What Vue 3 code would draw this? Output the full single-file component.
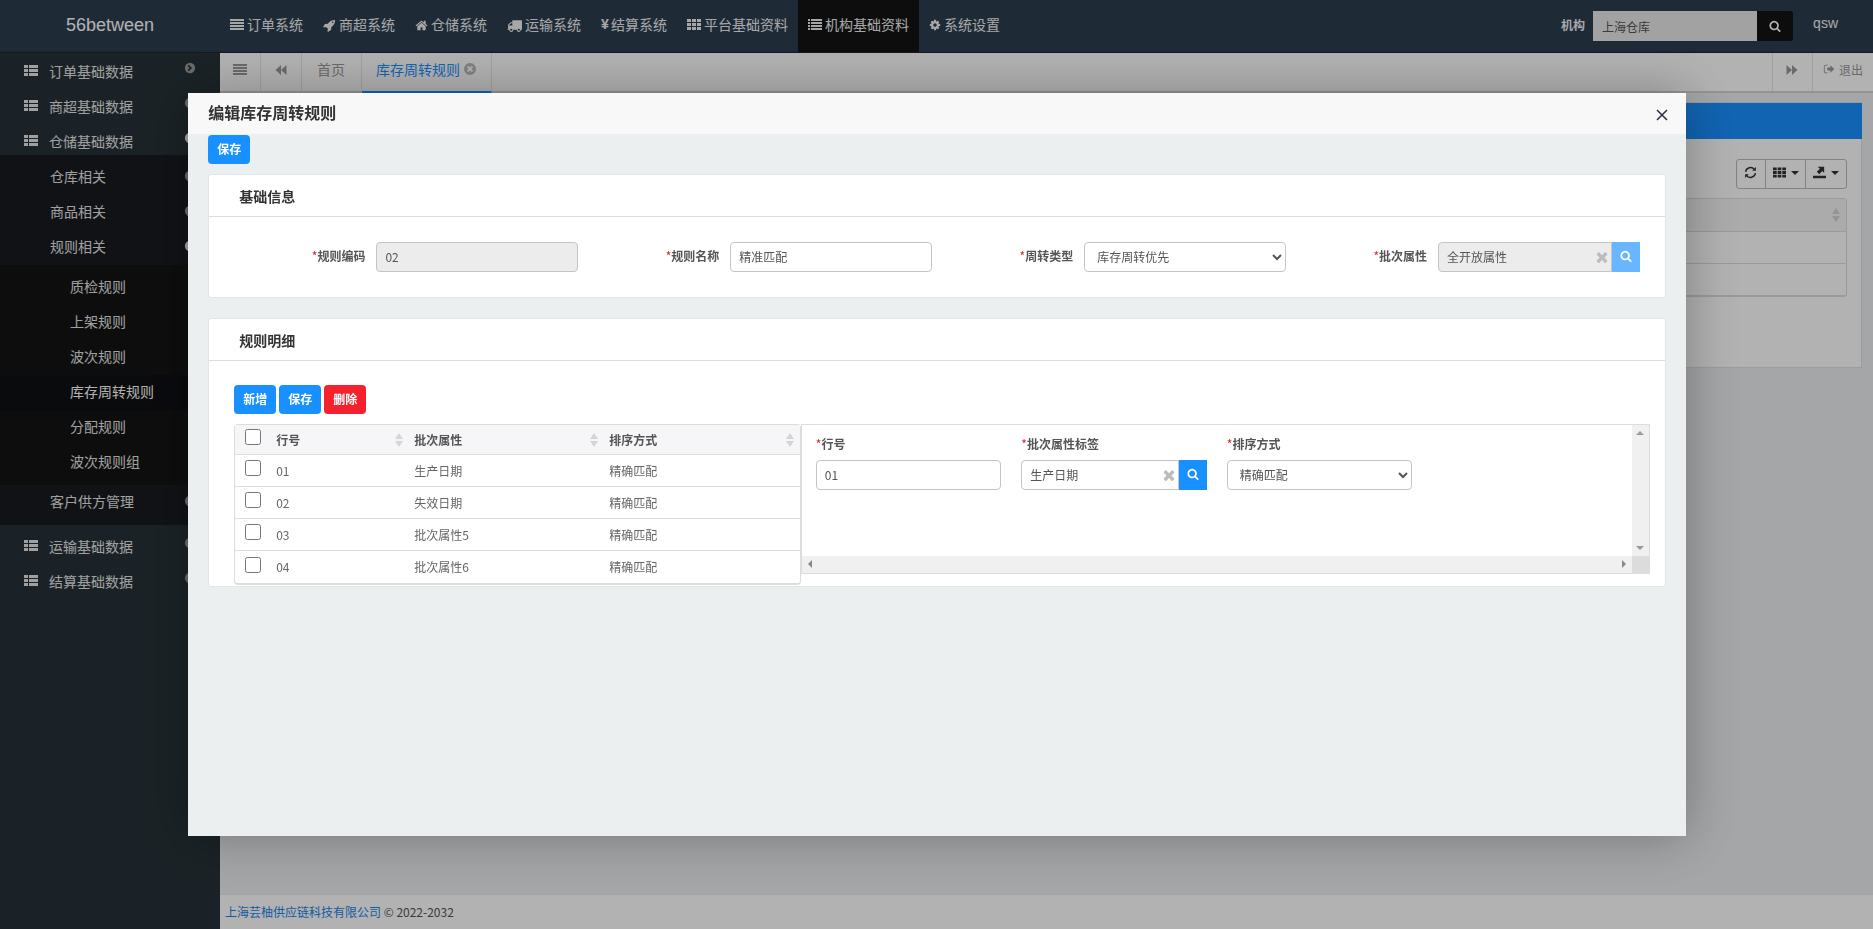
<script setup>
import { ref } from 'vue'

const paths = {
  search: 'M1216 832q0-185-131.5-316.5t-316.5-131.5-316.5 131.5-131.5 316.5 131.5 316.5 316.5 131.5 316.5-131.5 131.5-316.5zm512 832q0 52-38 90t-90 38q-54 0-90-38l-343-342q-179 124-399 124-143 0-273.5-55.5t-225-150-150-225-55.5-273.5 55.5-273.5 150-225 225-150 273.5-55.5 273.5 55.5 225 150 150 225 55.5 273.5q0 220-124 399l343 343q37 37 37 90z',
  home: 'M1472 992v480q0 26-19 45t-45 19h-384v-384h-256v384h-384q-26 0-45-19t-19-45v-480q0-1 .5-3t.5-3l575-474 575 474q1 2 1 6zm223-69l-62 74q-8 9-21 11h-3q-13 0-21-7l-692-577-692 577q-12 8-24 7-13-2-21-11l-62-74q-8-10-7-23.5t11-21.5l719-599q32-26 76-26t76 26l244 204v-195q0-14 9-23t23-9h192q14 0 23 9t9 23v408l219 182q10 8 11 21.5t-7 23.5z',
  rocket: 'M1440 448q0-40-28-68t-68-28-68 28-28 68 28 68 68 28 68-28 28-68zm224-288q0 249-75.5 430.5t-253.5 360.5q-81 80-195 176l-20 379q-2 16-16 26l-384 224q-7 4-16 4-12 0-23-9l-64-64q-13-14-8-32l85-276-281-281-276 85q-3 1-9 1-14 0-23-9l-64-64q-17-19-5-39l224-384q10-14 26-16l379-20q96-114 176-195 188-187 358-258t431-71q14 0 24 9.5t10 22.5z',
  truck: 'M640 1408q0-52-38-90t-90-38-90 38-38 90 38 90 90 38 90-38 38-90zm-384-512h384v-256h-158q-13 0-22 9l-195 195q-9 9-9 22v30zm1280 512q0-52-38-90t-90-38-90 38-38 90 38 90 90 38 90-38 38-90zm256-1088v1024q0 15-4 26.5t-13.5 18.5-16.5 11.5-23.5 6-22.5 2-25.5 0-22.5-.5q0 106-75 181t-181 75-181-75-75-181h-384q0 106-75 181t-181 75-181-75-75-181h-64q-3 0-22.5.5t-25.5 0-22.5-2-23.5-6-16.5-11.5-13.5-18.5-4-26.5q0-26 19-45t45-19v-320q0-8-.5-35t0-38 2.5-34.5 6.5-37 14-30.5 22.5-30l198-198q19-19 50.5-32t58.5-13h160v-192q0-26 19-45t45-19h1024q26 0 45 19t19 45z',
  cog: 'M1152 896q0-106-75-181t-181-75-181 75-75 181 75 181 181 75 181-75 75-181zm512-109v222q0 12-8 23t-20 13l-185 28q-19 54-39 91 35 50 107 138 10 12 10 25t-9 23q-27 37-99 108t-94 71q-12 0-26-9l-138-108q-44 23-91 38-16 136-29 186-7 28-36 28h-222q-14 0-24.5-8.5t-11.5-21.5l-28-184q-49-16-90-37l-141 107q-10 9-25 9-14 0-25-11-126-114-165-168-7-10-7-23 0-12 8-23 15-21 51-66.5t54-70.5q-27-50-41-99l-183-27q-13-2-21-12.5t-8-23.5v-222q0-12 8-23t19-13l186-28q14-46 39-92-40-57-107-138-10-12-10-24 0-10 9-23 26-36 98.5-107.5t94.5-71.5q13 0 26 10l138 107q44-23 91-38 16-136 29-186 7-28 36-28h222q14 0 24.5 8.5t11.5 21.5l28 184q49 16 90 37l142-107q9-9 24-9 13 0 25 10 129 119 165 170 7 8 7 22 0 12-8 23-15 21-51 66.5t-54 70.5q26 50 41 98l183 28q13 2 21 12.5t8 23.5z',
  times: 'M1490 1322q0 40-28 68l-136 136q-28 28-68 28t-68-28l-294-294-294 294q-28 28-68 28t-68-28l-136-136q-28-28-28-68t28-68l294-294-294-294q-28-28-28-68t28-68l136-136q28-28 68-28t68 28l294 294 294-294q28-28 68-28t68 28l136 136q28 28 28 68t-28 68l-294 294 294 294q28 28 28 68z',
  timesCircle: 'M1277 1122q0-26-19-45l-181-181 181-181q19-19 19-45 0-27-19-46l-90-90q-19-18-46-18-26 0-45 18l-181 181-181-181q-19-18-45-18-27 0-46 18l-90 90q-19 19-19 46 0 26 19 45l181 181-181 181q-19 19-19 45 0 27 19 46l90 90q19 18 46 18 26 0 45-18l181-181 181 181q19 18 45 18 27 0 46-18l90-90q19-19 19-46zm387-226q0 209-103 385.5t-279.5 279.5-385.5 103-385.5-103-279.5-279.5-103-385.5 103-385.5 279.5-279.5 385.5-103 385.5 103 279.5 279.5 103 385.5z',
  bars: 'M0 128h1792v256H0zM0 512h1792v256H0zM0 896h1792v256H0zM0 1280h1792v256H0z',
  th: 'M0 128h512v384H0zM640 128h512v384H640zM1280 128h512v384h-512zM0 640h512v384H0zM640 640h512v384H640zM1280 640h512v384h-512zM0 1152h512v384H0zM640 1152h512v384H640zM1280 1152h512v384h-512z',
  list: 'M0 128h256v256H0zM384 128h1408v256H384zM0 512h256v256H0zM384 512h1408v256H384zM0 896h256v256H0zM384 896h1408v256H384zM0 1280h256v256H0zM384 1280h1408v256H384z',
  thList: 'M0 128h512v384H0zM640 128h1152v384H640zM0 640h512v384H0zM640 640h1152v384H640zM0 1152h512v384H0zM640 1152h1152v384H640z',
  backward: 'M896 256v1280L192 896zM1600 256v1280L896 896z',
  forward: 'M192 256v1280l704-640zM896 256v1280l704-640z',
  circleRight: 'M896 128a768 768 0 1 0 0 1536a768 768 0 1 0 0-1536zM720 420l480 476-480 476-180-180 300-296-300-296z',
  signOut: 'M704 1536H416q-120 0-204-84t-84-204V544q0-120 84-204t204-84h288v128H416q-66 0-113 47t-47 113v704q0 66 47 113t113 47h288zM1696 896l-600 560v-330H640V666h456V336z',
  exporter: 'M0 1330h1792v360H0zM640 100h900v850l-260-250-420 430-340-330 430-420z',
}

const navItems = [
  { text: '订单系统', icon: 'bars', size: 14 },
  { text: '商超系统', icon: 'rocket', size: 13 },
  { text: '仓储系统', icon: 'home', size: 13 },
  { text: '运输系统', icon: 'truck', size: 15 },
  { text: '结算系统', yen: true },
  { text: '平台基础资料', icon: 'th', size: 14 },
  { text: '机构基础资料', icon: 'list', size: 14, active: true },
  { text: '系统设置', icon: 'cog', size: 12 },
]

const menu = [
  { text: '订单基础数据' },
  { text: '商超基础数据' },
  {
    text: '仓储基础数据',
    open: true,
    children: [
      { text: '仓库相关' },
      { text: '商品相关' },
      { text: '规则相关', open: true, children: ['质检规则', '上架规则', '波次规则', '库存周转规则', '分配规则', '波次规则组'] },
      { text: '客户供方管理' },
    ],
  },
  { text: '运输基础数据' },
  { text: '结算基础数据' },
]

const rows = ref([
  { no: '01', attr: '生产日期', sort: '精确匹配', checked: false },
  { no: '02', attr: '失效日期', sort: '精确匹配', checked: false },
  { no: '03', attr: '批次属性5', sort: '精确匹配', checked: false },
  { no: '04', attr: '批次属性6', sort: '精确匹配', checked: false },
])

const org = ref('上海仓库')
const form = ref({ code: '02', name: '精准匹配', type: '库存周转优先', attr: '全开放属性' })
const detail = ref({ no: '01', attr: '生产日期', sort: '精确匹配' })
</script>

<template>
  <div class="page">
    <header class="topbar">
      <a class="brand" href="#">56between</a>
      <nav class="nav">
        <a v-for="n in navItems" :key="n.text" href="#" class="nav-item" :class="{ active: n.active }">
          <span v-if="n.yen" class="yen">¥</span>
          <svg v-else class="ico" :width="n.size" :height="n.size" viewBox="0 0 1792 1792"><path :d="paths[n.icon]" /></svg>
          <span>{{ n.text }}</span>
        </a>
      </nav>
      <div class="org">
        <label for="org">机构</label>
        <input id="org" v-model="org" type="text" />
        <button type="button" class="org-btn" aria-label="搜索">
          <svg width="12" height="12" viewBox="0 0 1792 1792"><path :d="paths.search" /></svg>
        </button>
      </div>
      <a class="user" href="#">qsw</a>
    </header>

    <div class="shell">
      <aside class="sidebar">
        <ul class="menu">
          <li v-for="m in menu" :key="m.text">
            <a href="#" class="m1" :class="{ opened: m.open }">
              <svg class="m-ico" width="14" height="14" viewBox="0 0 1792 1792"><path :d="paths.thList" /></svg>
              <span>{{ m.text }}</span>
              <svg class="m-arrow" width="12" height="12" viewBox="0 0 1792 1792"><path :d="paths.circleRight" fill-rule="evenodd" /></svg>
            </a>
            <ul v-if="m.children" class="sub">
              <li v-for="s in m.children" :key="s.text">
                <a href="#" class="m2" :class="{ opened: s.open }">
                  <span>{{ s.text }}</span>
                  <svg class="m-arrow" width="12" height="12" viewBox="0 0 1792 1792"><path :d="paths.circleRight" fill-rule="evenodd" /></svg>
                </a>
                <ul v-if="s.children" class="leaf">
                  <li v-for="t in s.children" :key="t">
                    <a href="#" class="m3" :class="{ active: t === '库存周转规则' }">{{ t }}</a>
                  </li>
                </ul>
              </li>
            </ul>
          </li>
        </ul>
      </aside>

      <main class="main">
        <div class="tabs">
          <button type="button" class="tab tool" aria-label="菜单">
            <svg width="14" height="14" viewBox="0 0 1792 1792"><path :d="paths.bars" /></svg>
          </button>
          <button type="button" class="tab tool" aria-label="向左">
            <svg width="14" height="14" viewBox="0 0 1792 1792"><path :d="paths.backward" /></svg>
          </button>
          <a href="#" class="tab">首页</a>
          <a href="#" class="tab current">库存周转规则
            <svg width="14" height="14" viewBox="0 0 1792 1792"><path :d="paths.timesCircle" /></svg>
          </a>
          <span class="spacer"></span>
          <button type="button" class="tab tool right" aria-label="向右">
            <svg width="14" height="14" viewBox="0 0 1792 1792"><path :d="paths.forward" /></svg>
          </button>
          <a href="#" class="tab logout">
            <svg width="12" height="12" viewBox="0 0 1792 1792"><path :d="paths.signOut" /></svg>退出
          </a>
        </div>

        <section class="panel">
          <div class="panel-head"></div>
          <div class="panel-body">
            <div class="btn-group">
              <button type="button" aria-label="刷新">
                <svg width="13" height="13" viewBox="0 0 14 14" stroke="currentColor">
                  <path d="M1.700 6.300A5.300 5.300 0 0 1 11.300 4M12.300 7.700A5.300 5.300 0 0 1 2.700 10" fill="none" stroke-width="1.500" />
                  <path d="M12.800 1.200v4H8.800zM1.200 12.800v-4h4z" stroke="none" />
                </svg>
              </button>
              <button type="button" aria-label="列">
                <svg width="13" height="13" viewBox="0 0 1792 1664"><path :d="paths.th" /></svg><i class="caret"></i>
              </button>
              <button type="button" aria-label="导出">
                <svg width="13" height="13" viewBox="0 0 1792 1792"><path :d="paths.exporter" /></svg><i class="caret"></i>
              </button>
            </div>
            <div class="bg-table">
              <div class="bg-row bg-th"><span class="sort"></span></div>
              <div class="bg-row"></div>
              <div class="bg-row"></div>
            </div>
          </div>
        </section>

        <footer class="footer"><a href="#">上海芸柚供应链科技有限公司</a> © 2022-2032</footer>
      </main>
    </div>

    <div class="shade">
      <div class="dialog" role="dialog" aria-labelledby="dlg-title">
        <div class="dialog-head">
          <h2 id="dlg-title">编辑库存周转规则</h2>
          <button type="button" class="close" aria-label="关闭">
            <svg width="12" height="12" viewBox="0 0 12 12"><path d="M1 1l10 10M11 1L1 11" stroke="#2d2c3b" stroke-width="1.500" /></svg>
          </button>
        </div>
        <div class="dialog-body">
          <button type="button" class="btn">保存</button>

          <section class="card">
            <h3>基础信息</h3>
            <div class="form-row">
              <div class="item">
                <label for="code"><b>*</b>规则编码</label>
                <div class="field"><input id="code" v-model="form.code" type="text" readonly /></div>
              </div>
              <div class="item">
                <label for="name"><b>*</b>规则名称</label>
                <div class="field"><input id="name" v-model="form.name" type="text" /></div>
              </div>
              <div class="item">
                <label for="type"><b>*</b>周转类型</label>
                <div class="field"><select id="type" v-model="form.type"><option>库存周转优先</option></select></div>
              </div>
              <div class="item">
                <label for="attr"><b>*</b>批次属性</label>
                <div class="field pick">
                  <input id="attr" v-model="form.attr" type="text" readonly />
                  <svg class="clear" width="16" height="16" viewBox="0 0 1792 1792"><path :d="paths.times" /></svg>
                  <button type="button" disabled aria-label="选择">
                    <svg width="12" height="12" viewBox="0 0 1792 1792"><path :d="paths.search" /></svg>
                  </button>
                </div>
              </div>
            </div>
          </section>

          <section class="card">
            <h3>规则明细</h3>
            <div class="detail">
              <div class="actions">
                <button type="button" class="btn">新增</button>
                <button type="button" class="btn">保存</button>
                <button type="button" class="btn danger">删除</button>
              </div>
              <div class="split">
                <div class="grid-wrap">
                  <table>
                    <thead>
                      <tr>
                        <th class="c0"><input type="checkbox" aria-label="全选" /></th>
                        <th class="c1"><div>行号<span class="sort"></span></div></th>
                        <th class="c2"><div>批次属性<span class="sort"></span></div></th>
                        <th class="c3"><div>排序方式<span class="sort"></span></div></th>
                      </tr>
                    </thead>
                    <tbody>
                      <tr v-for="r in rows" :key="r.no">
                        <td class="c0"><input v-model="r.checked" type="checkbox" :aria-label="r.no" /></td>
                        <td>{{ r.no }}</td>
                        <td>{{ r.attr }}</td>
                        <td>{{ r.sort }}</td>
                      </tr>
                    </tbody>
                  </table>
                </div>
                <div class="pane">
                  <div class="pane-form">
                    <div>
                      <label for="d-no"><b>*</b>行号</label>
                      <input id="d-no" v-model="detail.no" type="text" />
                    </div>
                    <div>
                      <label for="d-attr"><b>*</b>批次属性标签</label>
                      <div class="pick">
                        <input id="d-attr" v-model="detail.attr" type="text" />
                        <svg class="clear" width="16" height="16" viewBox="0 0 1792 1792"><path :d="paths.times" /></svg>
                        <button type="button" aria-label="选择">
                          <svg width="12" height="12" viewBox="0 0 1792 1792"><path :d="paths.search" /></svg>
                        </button>
                      </div>
                    </div>
                    <div>
                      <label for="d-sort"><b>*</b>排序方式</label>
                      <select id="d-sort" v-model="detail.sort"><option>精确匹配</option></select>
                    </div>
                  </div>
                  <div class="bar vbar"><i class="up"></i><i class="down"></i></div>
                  <div class="bar hbar"><i class="left"></i><i class="rt"></i></div>
                  <div class="corner"></div>
                </div>
              </div>
            </div>
          </section>
        </div>
      </div>
    </div>
  </div>
</template>

<style>
body { margin: 0; }
</style>

<style scoped>
.page {
  display: flex;
  flex-direction: column;
  min-height: 100vh;
  font-family: "Noto Sans CJK SC", sans-serif;
  font-size: 12px;
  color: #555;
}
.page * { box-sizing: border-box; }
a { color: inherit; text-decoration: none; }
ul { list-style: none; margin: 0; padding: 0; }
button, input, select { font: inherit; margin: 0; }
button { border: 0; padding: 0; }
svg { fill: currentColor; flex: none; }

.topbar {
  display: flex;
  align-items: center;
  height: 53px;
  padding-right: 35px;
  background: #2c3e50;
  border-bottom: 1px solid #1b2430;
  color: #f0f0f0;
}
.brand {
  width: 220px;
  padding-left: 66px;
  padding-bottom: 2px;
  font: 18px "Liberation Sans", sans-serif;
  color: #fff;
}
.nav { display: flex; align-self: stretch; flex: 1; font-size: 14px; }
.nav-item {
  display: flex;
  align-items: center;
  gap: 3px;
  padding: 0 10px 4px;
  white-space: nowrap;
}
.nav-item .ico { margin-top: 2px; }
.nav-item.active { background: #141414; }
.yen { width: 7px; font: bold 14px "Liberation Sans", sans-serif; }
.org { display: flex; align-items: center; }
.org label { margin-right: 8px; padding-bottom: 4px; font-weight: bold; }
.org input {
  width: 164px;
  height: 30px;
  padding: 0 9px;
  border: 0;
  border-radius: 0;
  background: #e8e8e8;
  color: #555;
}
.org-btn {
  display: grid;
  place-items: center;
  width: 36px;
  height: 30px;
  border-radius: 0 3px 3px 0;
  background: #141414;
  color: #fff;
}
.user { margin-left: 20px; padding-bottom: 6px; font: 14px "Liberation Sans", sans-serif; }

.shell { display: flex; flex: 1; }
.sidebar { width: 220px; flex: none; background: #263238; color: #e6e6e6; font-size: 14px; }
.m1, .m2, .m3 { display: flex; height: 35px; line-height: 26px; align-items: center; }
.m1 { align-items: flex-end; padding: 0 24px 1px; gap: 11px; }
.m1 .m-ico { margin-bottom: 6px; }
.menu > li:first-child .m1 { height: 32px; }
.m-arrow { margin-left: auto; color: #999; }
.m1 .m-arrow { margin-bottom: 10px; }
.opened .m-arrow { color: #eee; }
.sub { padding: 5px 0; background: #181b20; }
.m2 { padding: 0 24px 4px 50px; }
.leaf { padding: 5px 0; background: #141414; }
.m3 { padding: 0 0 4px 70px; }
.m3.active { background: #0f1014; color: #fff; }

.main { display: flex; flex-direction: column; flex: 1; min-width: 0; background: #eceef0; }
.tabs {
  display: flex;
  height: 40px;
  background: #fff;
  border-bottom: 2px solid #d5d5d5;
  color: #999;
  font-size: 14px;
}
.tab {
  display: flex;
  align-items: center;
  gap: 3px;
  padding: 0 16px 6px 15px;
  border-right: 1px solid #e6e6e6;
  background: none;
  color: inherit;
}
.tab.tool { width: 41px; padding: 0 0 4px; justify-content: center; }
.tab.current { margin-bottom: -2px; padding: 0 14px 6px; border-bottom: 2px solid #1890ff; color: #1890ff; }
.tab.current svg { color: #bbb; }
.spacer { flex: 1; }
.tab.right { border-left: 1px solid #e6e6e6; }
.tab.logout { padding: 0 10px 6px; gap: 4px; font-size: 12px; border-right: 0; }

.panel { margin: 9px 11px 10px 10px; border: 1px solid #e0e0e0; background: #fff; }
.panel-head { height: 36px; background: #1890ff; margin: 0 -1px; }
.panel-body { padding: 20px 14px 70px; }
.btn-group { display: flex; width: 111px; margin: 0 0 9px auto; border: 1px solid #bbb; border-radius: 3px; }
.btn-group button {
  display: flex;
  align-items: center;
  justify-content: center;
  gap: 5px;
  flex: 41 1 0;
  height: 28px;
  padding-bottom: 3px;
  background: none;
  color: #333;
}
.btn-group button:first-child { flex-grow: 29; }
.btn-group button + button { border-left: 1px solid #bbb; }
.caret { border: 4px solid transparent; border-top-color: currentColor; border-bottom: 0; }
.bg-table { border: 1px solid #ddd; border-bottom-width: 2px; border-radius: 3px; }
.bg-row { height: 32px; }
.bg-row + .bg-row { border-top: 1px solid #ddd; }
.bg-th { display: flex; align-items: center; justify-content: flex-end; padding-right: 6px; background: #f5f5f6; }
.sort { display: grid; gap: 2px; align-content: center; }
.sort::before, .sort::after { content: ""; border: 4px solid transparent; }
.sort::before { border-top: 0; border-bottom: 6px solid #d5d5d8; }
.sort::after { border-bottom: 0; border-top: 6px solid #d5d5d8; }
.footer { margin-top: auto; height: 35px; padding: 8px 5px; border-top: 1px solid #e7eaec; background: #fff; line-height: 18px; }
.footer a { color: #1c84e8; }

.shade {
  position: fixed;
  inset: 0;
  display: flex;
  align-items: center;
  justify-content: center;
  padding-left: 1px;
  background: rgba(0, 0, 0, .3);
}
.dialog {
  width: 80%;
  height: 80%;
  background: #ebeff0;
  box-shadow: 1px 1px 50px rgba(0, 0, 0, .3);
}
.dialog-head {
  display: flex;
  align-items: center;
  justify-content: space-between;
  height: 41px;
  padding: 0 17px 0 20px;
  background: #f8f8f8;
}
h2 { margin: 0; padding-bottom: 2px; font-size: 16px; line-height: 24px; font-weight: bold; color: #333; }
.close { display: grid; place-items: center; width: 14px; height: 14px; margin-top: 3px; background: none; }
.dialog-body { padding: 1px 20px; }
.btn {
  width: 42px;
  height: 29px;
  padding-bottom: 2px;
  border-radius: 4px;
  background: #1890ff;
  color: #fff;
  font-weight: bold;
}
.btn.danger { background: #f5222d; }
.card { margin-top: 10px; border: 1px solid #e1e5e7; border-radius: 3px; background: #fff; }
.card + .card { margin-top: 20px; }
h3 { margin: 0; padding: 10px 30px 8px; font-size: 14px; line-height: 23px; font-weight: bold; color: #333; border-bottom: 1px solid #ddd; }
.form-row { display: grid; grid-template-columns: repeat(4, 1fr); padding: 25px 25px 25px 15px; }
.item { display: flex; }
.item label { flex: 1; padding-right: 11px; text-align: right; line-height: 28px; }
.dialog label { font-weight: bold; color: #555; }
label b { color: #e0202c; font-weight: normal; }
.field { width: 57%; }
.dialog input[type="text"], .dialog select {
  width: 100%;
  height: 30px;
  padding: 0 8px;
  border: 1px solid #c4c4c4;
  border-radius: 4px;
  background: #fff;
  color: #555;
}
.dialog input[readonly] { background: #ececec; }
.pick { position: relative; display: flex; }
.dialog .pick input[type="text"] { flex: 1; min-width: 0; border-radius: 4px 0 0 4px; }
.pick button { display: grid; place-items: center; flex: none; width: 28px; height: 30px; padding-bottom: 2px; background: #1890ff; color: #fff; }
.pick button:disabled { opacity: .65; }
.clear { position: absolute; right: 30px; top: 7px; color: #bcbcbc; }

.detail { padding: 24px 15px 1px 25px; }
.actions { display: flex; gap: 3px; margin-bottom: 10px; }
.split { display: flex; align-items: flex-start; }
.grid-wrap { flex: 2 1 0; border: 1px solid #ddd; border-bottom-width: 2px; border-radius: 4px; }
table { width: 100%; table-layout: fixed; border-collapse: collapse; }
th, td { height: 32px; padding: 0 8px; text-align: left; line-height: 20px; color: #666; }
th { height: 30px; background: #f6f6f8; color: #555; }
th div { display: flex; justify-content: space-between; margin-right: -5px; }
tbody tr { border-top: 1px solid #ddd; }
.c0 { width: 33px; padding: 0 0 0 10px; }
.c1 { width: 138px; }
.c2 { width: 195px; }
.c3 { padding-right: 11px; }
.c0 input { display: block; width: 16px; height: 16px; margin-bottom: 5px; }
.pane {
  flex: 3 1 0;
  display: grid;
  grid-template-columns: 1fr 17px;
  grid-template-rows: 131px 17px;
  border: 1px solid #ddd;
}
.pane-form {
  display: grid;
  grid-template-columns: repeat(4, 1fr);
  gap: 20px;
  align-content: start;
  padding: 9px 14px 0;
}
.pane-form label { display: block; height: 26px; line-height: 20px; }
.bar { display: flex; justify-content: space-between; align-items: center; background: #f0f0f0; padding: 6px; }
.vbar { flex-direction: column; }
.bar i { border: 4px solid transparent; }
.bar .up { border-top: 0; border-bottom-color: #999; }
.bar .down { border-bottom: 0; border-top-color: #999; }
.bar .left { border-left: 0; border-right-color: #888; }
.bar .rt { border-right: 0; border-left-color: #888; }
.corner { background: #dcdcdc; }
</style>
